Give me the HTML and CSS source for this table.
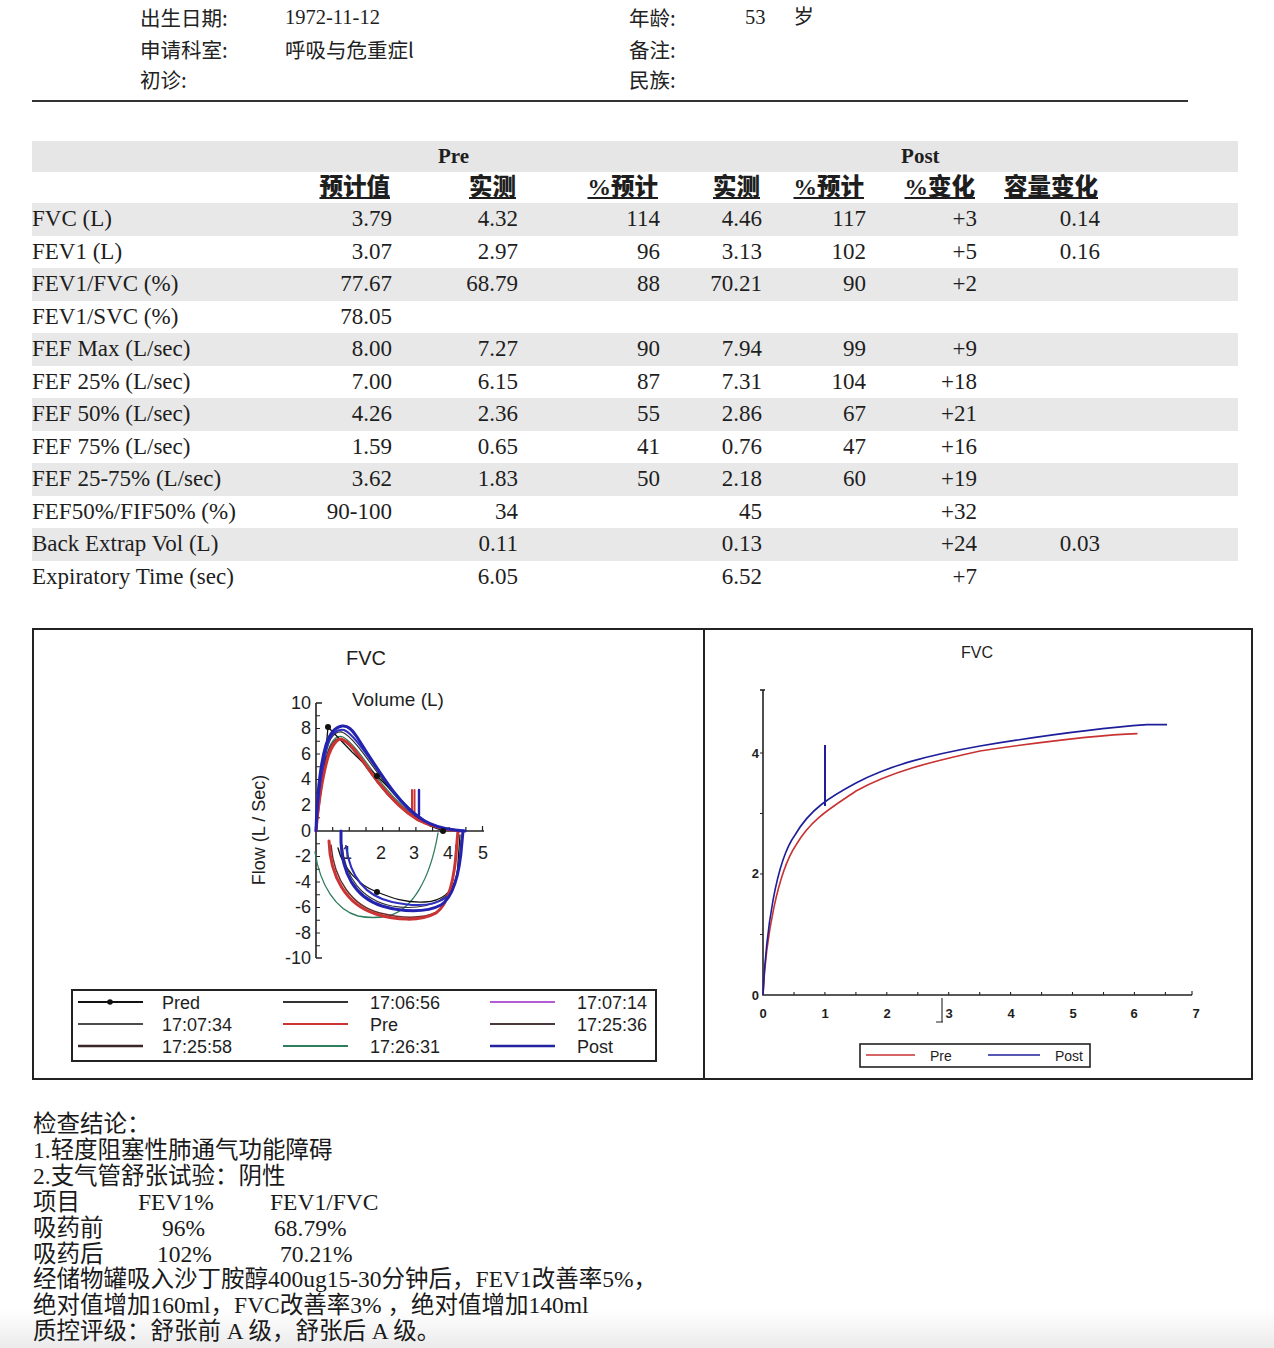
FILE: index.html
```html
<!DOCTYPE html>
<html lang="zh">
<head>
<meta charset="utf-8">
<title>肺功能检查报告</title>
<link rel="stylesheet" href="styles.css">
</head>
<body>
<div class="page">
  <section class="info">
    <div class="info-row">
      <span class="lab">出生日期:</span><span class="num">1972-11-12</span><span class="lab">年龄:</span><span><span class="num">53</span><span class="lab unit">岁</span></span>
    </div>
    <div class="info-row second">
      <span class="lab">申请科室:</span><span class="lab">呼吸与危重症l</span><span class="lab">备注:</span><span></span>
    </div>
    <div class="info-row">
      <span class="lab">初诊:</span><span></span><span class="lab">民族:</span><span></span>
    </div>
  </section>
  <hr class="rule">

  <section class="results">
    <div class="band"><span class="pre">Pre</span><span class="post">Post</span></div>
    <div class="row heads"><span></span><span class="h">预计值</span><span class="h">实测</span><span class="h">%预计</span><span class="h">实测</span><span class="h">%预计</span><span class="h">%变化</span><span class="h">容量变化</span><span></span></div>
    <div class="row alt"><span class="name">FVC (L)</span><span>3.79</span><span>4.32</span><span>114</span><span>4.46</span><span>117</span><span>+3</span><span>0.14</span><span></span></div>
    <div class="row"><span class="name">FEV1 (L)</span><span>3.07</span><span>2.97</span><span>96</span><span>3.13</span><span>102</span><span>+5</span><span>0.16</span><span></span></div>
    <div class="row alt"><span class="name">FEV1/FVC (%)</span><span>77.67</span><span>68.79</span><span>88</span><span>70.21</span><span>90</span><span>+2</span><span></span><span></span></div>
    <div class="row"><span class="name">FEV1/SVC (%)</span><span>78.05</span><span></span><span></span><span></span><span></span><span></span><span></span><span></span></div>
    <div class="row alt"><span class="name">FEF Max (L/sec)</span><span>8.00</span><span>7.27</span><span>90</span><span>7.94</span><span>99</span><span>+9</span><span></span><span></span></div>
    <div class="row"><span class="name">FEF 25% (L/sec)</span><span>7.00</span><span>6.15</span><span>87</span><span>7.31</span><span>104</span><span>+18</span><span></span><span></span></div>
    <div class="row alt"><span class="name">FEF 50% (L/sec)</span><span>4.26</span><span>2.36</span><span>55</span><span>2.86</span><span>67</span><span>+21</span><span></span><span></span></div>
    <div class="row"><span class="name">FEF 75% (L/sec)</span><span>1.59</span><span>0.65</span><span>41</span><span>0.76</span><span>47</span><span>+16</span><span></span><span></span></div>
    <div class="row alt"><span class="name">FEF 25-75% (L/sec)</span><span>3.62</span><span>1.83</span><span>50</span><span>2.18</span><span>60</span><span>+19</span><span></span><span></span></div>
    <div class="row"><span class="name">FEF50%/FIF50% (%)</span><span>90-100</span><span>34</span><span></span><span>45</span><span></span><span>+32</span><span></span><span></span></div>
    <div class="row alt"><span class="name">Back Extrap Vol (L)</span><span></span><span>0.11</span><span></span><span>0.13</span><span></span><span>+24</span><span>0.03</span><span></span></div>
    <div class="row"><span class="name">Expiratory Time (sec)</span><span></span><span>6.05</span><span></span><span>6.52</span><span></span><span>+7</span><span></span><span></span></div>
  </section>

  <section class="charts">
    <div class="panel panel-left">
      <svg class="chart" width="669" height="448" viewBox="34 630 669 448" xmlns="http://www.w3.org/2000/svg">
        <text x="366" y="665" text-anchor="middle" class="t20">FVC</text>
        <text x="352" y="706" class="t19">Volume (L)</text>
        <text x="265" y="830" transform="rotate(-90 265 830)" text-anchor="middle" class="t18">Flow (L / Sec)</text>
        <g stroke="#222" stroke-width="1.6" fill="none">
          <path d="M316,703 V958 M316,703 h6 M316,958 h6"/>
          <path d="M316,831 H484"/>
        </g>
        <g stroke="#222" stroke-width="1.2">
          <path d="M316,715.75 h4 M316,728.5 h4 M316,741.25 h4 M316,754 h4 M316,766.75 h4 M316,779.5 h4 M316,792.25 h4 M316,805 h4 M316,817.75 h4 M316,843.75 h4 M316,856.5 h4 M316,869.25 h4 M316,882 h4 M316,894.75 h4 M316,907.5 h4 M316,920.25 h4 M316,933 h4 M316,945.75 h4"/>
          <path d="M332.7,831 v-4 M349.3,831 v-4 M366,831 v-4 M382.6,831 v-4 M399.3,831 v-4 M415.9,831 v-4 M432.6,831 v-4 M449.2,831 v-4 M465.9,831 v-4 M482.5,831 v-5"/>
        </g>
        <g class="t18" text-anchor="end">
          <text x="311" y="709">10</text>
          <text x="311" y="734">8</text>
          <text x="311" y="760">6</text>
          <text x="311" y="785">4</text>
          <text x="311" y="811">2</text>
          <text x="311" y="837">0</text>
          <text x="311" y="862">-2</text>
          <text x="311" y="888">-4</text>
          <text x="311" y="913">-6</text>
          <text x="311" y="939">-8</text>
          <text x="311" y="964">-10</text>
        </g>
        <g class="t18" text-anchor="middle">
          <text x="347" y="859">1</text>
          <text x="381" y="859">2</text>
          <text x="414" y="859">3</text>
          <text x="448" y="859">4</text>
          <text x="483" y="859">5</text>
        </g>
        <g fill="none" stroke-linecap="round" stroke-linejoin="round">
          <path stroke="#333" stroke-width="1.3" d="M316,831 C318,800 321,768 327,748 C331,735 336,731 342,732 C352,736 366,757 382,779 C396,798 408,810 420,819 C432,826 444,829 452,830 L458,831"/>
          <path stroke="#2f7d5c" stroke-width="1.2" d="M316,831 C318,800 322,770 329,748 C333,738 338,735 343,737 C353,742 367,764 383,785 C397,802 409,813 421,820 C433,826 441,829 446,830"/>
          <path stroke="#5a3030" stroke-width="1.5" d="M316,831 C318,805 322,775 328,752 C332,742 336,738 340,739 C350,742 362,762 378,783 C392,801 405,812 418,820 C430,826 443,829 450,830 L457,831"/>
          <path stroke="#111" stroke-width="1.3" d="M316,831 L325,760 L328,727 L352,752 L377,776 L398,797 L415,816 L430,826 L443,831"/>
          <path stroke="#2f7d5c" stroke-width="1.3" d="M315,852 C320,885 336,910 358,916 C368,918 378,918 388,916 C412,910 430,880 438,833"/>
          <path stroke="#111" stroke-width="1.3" d="M338,848 C343,868 358,885 377,892 C392,898 405,903 425,902 C442,901 452,893 457,876 L460,835"/>
          <path stroke="#333" stroke-width="1.2" d="M342,845 C345,878 362,900 392,906 C415,910 438,906 450,892 C457,880 460,860 461,840"/>
          <path stroke="#6a3030" stroke-width="1.5" d="M331,845 C334,880 352,906 380,913 C400,918 420,920 437,912 C450,904 455,880 456,845"/>
          <path stroke="#cc3333" stroke-width="3" d="M316,831 C318,808 322,778 328,757 C332,745 337,739 341,739 C350,741 362,760 378,782 C392,800 405,812 418,820 C430,826 445,829 452,830 L460,831"/>
          <path stroke="#cc3333" stroke-width="3" d="M329,841 C330,876 346,905 376,914 C395,920 420,922 436,913 C449,904 455,878 457,842 L458,831"/>
          <path stroke="#cc3333" stroke-width="2" d="M412,790 V814 M414.5,790 V813"/>
          <path stroke="#3030c0" stroke-width="2" d="M316,831 C318,798 322,762 329,741 C333,731 338,729 344,730 C354,734 368,757 384,779 C398,799 410,811 424,820"/>
          <path stroke="#3030c0" stroke-width="2" d="M346,846 C350,876 365,896 392,902 C415,907 435,906 447,897"/>
          <path stroke="#2323b0" stroke-width="3" d="M316,831 C317,800 320,765 326,745 C330,732 336,727 342,726 C348,725 352,730 357,737 C367,753 379,772 393,791 C403,804 413,814 423,820 C433,826 446,829 455,830 L465,831"/>
          <path stroke="#2323b0" stroke-width="3" d="M341,831 L341,842 C342,872 354,897 382,906 C402,912 426,913 441,905 C455,896 460,870 462,842 L463,831"/>
          <path stroke="#2323b0" stroke-width="2.4" d="M419,790 V815"/>
        </g>
        <g fill="#111">
          <circle cx="328" cy="727" r="3"/>
          <circle cx="377" cy="776" r="3"/>
          <circle cx="443" cy="831" r="3"/>
          <circle cx="377" cy="892" r="3"/>
        </g>
        <rect x="72" y="990" width="584" height="71" fill="none" stroke="#222" stroke-width="2"/>
        <g stroke-width="2" fill="none">
          <path stroke="#111" d="M78,1002 H143"/>
          <path stroke="#333" d="M283,1002 H348"/>
          <path stroke="#b45ad2" d="M490,1002 H555"/>
          <path stroke="#111" stroke-width="1.4" d="M78,1024 H143"/>
          <path stroke="#cc3333" d="M283,1024 H348"/>
          <path stroke="#4a3a3a" d="M490,1024 H555"/>
          <path stroke="#3a2626" stroke-width="2.4" d="M78,1046 H143"/>
          <path stroke="#2f7d5c" d="M283,1046 H348"/>
          <path stroke="#2323a0" stroke-width="2.4" d="M490,1046 H555"/>
        </g>
        <circle cx="110" cy="1002" r="2.8" fill="#111"/>
        <g class="t18">
          <text x="162" y="1009">Pred</text>
          <text x="370" y="1009">17:06:56</text>
          <text x="577" y="1009">17:07:14</text>
          <text x="162" y="1031">17:07:34</text>
          <text x="370" y="1031">Pre</text>
          <text x="577" y="1031">17:25:36</text>
          <text x="162" y="1053">17:25:58</text>
          <text x="370" y="1053">17:26:31</text>
          <text x="577" y="1053">Post</text>
        </g>
      </svg>
    </div>
    <div class="panel panel-right">
      <svg class="chart" width="546" height="448" viewBox="705 630 546 448" xmlns="http://www.w3.org/2000/svg">
        <text x="977" y="658" text-anchor="middle" class="t16">FVC</text>
        <g stroke="#222" stroke-width="1.6" fill="none">
          <path d="M763,690 V995 H1192"/>
          <path d="M760,690 h5"/>
        </g>
        <g stroke="#222" stroke-width="1.1" fill="none">
          <path d="M763,934.5 h-3 M763,874 h-3 M763,813.5 h-3 M763,753 h-3"/>
          <path d="M794,995 v-3 M824.9,995 v-3 M855.9,995 v-3 M886.8,995 v-3 M917.8,995 v-3 M948.7,995 v-3 M979.7,995 v-3 M1010.6,995 v-3 M1041.6,995 v-3 M1072.5,995 v-3 M1103.5,995 v-3 M1134.4,995 v-3 M1165.4,995 v-3 M1192,995 v-4"/>
          <path d="M942,998 V1022 M936,1022 H943"/>
        </g>
        <g class="t13" text-anchor="end">
          <text x="759" y="758">4</text>
          <text x="759" y="878">2</text>
          <text x="759" y="1000">0</text>
        </g>
        <g class="t13" text-anchor="middle">
          <text x="763" y="1018">0</text>
          <text x="825" y="1018">1</text>
          <text x="887" y="1018">2</text>
          <text x="949" y="1018">3</text>
          <text x="1011" y="1018">4</text>
          <text x="1073" y="1018">5</text>
          <text x="1134" y="1018">6</text>
          <text x="1196" y="1018">7</text>
        </g>
        <g fill="none" stroke-width="1.6" stroke-linejoin="round">
          <path stroke="#c83232" d="M763,995 C766,935 778,872 796,845 C811,819 831,808 856,791 C890,772 930,762 980,751 C1040,742 1095,735 1137.5,733.6"/>
          <path stroke="#1e1e9a" d="M763,995 C766,930 776,861 795,835 C810,809 830,797 856,783 C890,765 930,755 980,746 C1040,736 1100,728 1147,724.6 L1167,724.6"/>
          <path stroke="#1e1e9a" stroke-width="2" d="M825,806 V745"/>
        </g>
        <rect x="860" y="1044" width="230" height="23" fill="none" stroke="#222" stroke-width="1.6"/>
        <path d="M866,1055 H915" stroke="#c83232" stroke-width="1.6"/>
        <path d="M988,1055 H1040" stroke="#1e1e9a" stroke-width="1.6"/>
        <g class="t14">
          <text x="930" y="1061">Pre</text>
          <text x="1055" y="1061">Post</text>
        </g>
      </svg>
    </div>
  </section>

  <section class="concl">
    <div>检查结论：</div>
    <div>1.轻度阻塞性肺通气功能障碍</div>
    <div>2.支气管舒张试验：阴性</div>
    <div class="trio"><span>项目</span><span>FEV1%</span><span>FEV1/FVC</span></div>
    <div class="trio"><span>吸药前</span><span class="in24">96%</span><span class="in4">68.79%</span></div>
    <div class="trio"><span>吸药后</span><span class="in19">102%</span><span class="in10">70.21%</span></div>
    <div>经储物罐吸入沙丁胺醇400ug15-30分钟后，FEV1改善率5%，</div>
    <div>绝对值增加160ml，FVC改善率3% ，绝对值增加140ml</div>
    <div>质控评级：舒张前 A 级，舒张后 A 级。</div>
  </section>
</div>
</body>
</html>
```

FILE: styles.css
```css
* {
  box-sizing: border-box;
}

html,
body {
  margin: 0;
  padding: 0;
}

body {
  width: 1274px;
  min-height: 1348px;
  background: linear-gradient(to bottom, #ffffff 0, #ffffff 1310px, #ebebeb 1348px);
  color: #1e1e1e;
  font-family: "Liberation Serif", "Noto Sans CJK SC", serif;
}

.page {
  padding-left: 32px;
}

/* patient info */
.info {
  padding-left: 108px;
  font-size: 19px;
}

.info-row {
  display: grid;
  grid-template-columns: 145px 344px 116px auto;
  height: 30px;
  line-height: 30px;
  align-items: center;
}

.info-row.second {
  margin-top: 4px;
}

.lab {
  font-family: "Noto Sans CJK SC", sans-serif;
  font-size: 20.5px;
  color: #222;
}

.num {
  font-family: "Liberation Serif", serif;
  font-size: 20.5px;
}

.unit {
  margin-left: 28px;
}

.rule {
  margin: 6px 0 0 0;
  width: 1156px;
  height: 2px;
  border: 0;
  background: #333;
}

/* results table */
.results {
  margin-top: 39px;
  width: 1206px;
  font-size: 23px;
}

.band {
  display: flex;
  align-items: center;
  height: 31px;
  background: #e6e6e6;
  font-weight: bold;
  font-size: 21px;
}

.pre {
  margin-left: 406px;
}

.post {
  margin-left: 432px;
}

.row {
  display: grid;
  grid-template-columns: 200px 160px 126px 142px 102px 104px 111px 123px 138px;
  height: 32.5px;
  align-items: center;
}

.row > span {
  text-align: right;
  white-space: nowrap;
}

.row > .name {
  text-align: left;
}

.row.alt {
  background: #e8e8e8;
}

.row.heads {
  height: 31px;
}

.heads .h {
  font-family: "Liberation Serif", "Noto Sans CJK SC", serif;
  font-weight: 900;
  font-size: 23.5px;
  line-height: 1;
  padding-right: 2px;
  text-decoration: underline;
  text-decoration-thickness: 2px;
  text-underline-offset: 2px;
}

/* charts */
.charts {
  display: flex;
  margin-top: 35px;
  width: 1221px;
  height: 452px;
  border: 2px solid #222;
}

.panel-left {
  width: 671px;
  border-right: 2px solid #222;
}

.panel-right {
  flex: 1;
}

.chart {
  display: block;
}

.chart text {
  font-family: "Liberation Sans", Arial, sans-serif;
  fill: #1e1e1e;
}

.t20 { font-size: 20px; }
.t19 { font-size: 19px; }
.t18 { font-size: 18px; }
.t16 { font-size: 16px; }
.t14 { font-size: 14px; }
.t13 { font-size: 13px; font-weight: bold; }

/* conclusion */
.concl {
  margin-top: 32px;
  padding-left: 1px;
  font-size: 23.5px;
  line-height: 25.9px;
  color: #1a1a1a;
}

.trio {
  display: grid;
  grid-template-columns: 105px 132px auto;
}

.in24 { padding-left: 24px; }
.in19 { padding-left: 19px; }
.in10 { padding-left: 10px; }
.in4 { padding-left: 4px; }
```
